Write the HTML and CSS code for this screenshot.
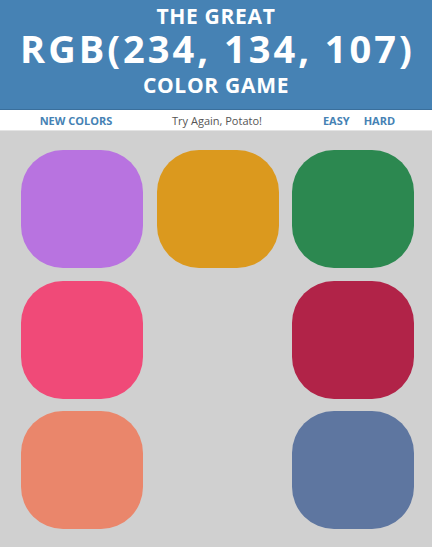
FILE: index.html
```html
<!DOCTYPE html>
<html>
<head>
<meta charset="utf-8">
<link rel="stylesheet" href="styles.css">
</head>
<body>
<header class="banner">
  <div class="title-small">The Great</div>
  <div class="title-big">RGB(234, 134, 107)</div>
  <div class="title-small title-last">Color Game</div>
</header>
<nav class="stripe">
  <span class="btn">New Colors</span>
  <span class="message">Try Again, Potato!</span>
  <span class="modes"><span class="btn">Easy</span><span class="btn">Hard</span></span>
</nav>
<main class="board">
  <div class="square" style="background:#b873e0"></div>
  <div class="square" style="background:#db991e"></div>
  <div class="square" style="background:#2c8850"></div>
  <div class="square" style="background:#f04a78"></div>
  <div class="square hidden"></div>
  <div class="square" style="background:#b12348"></div>
  <div class="square" style="background:#ea866b"></div>
  <div class="square hidden"></div>
  <div class="square" style="background:#5e76a0"></div>
</main>
</body>
</html>
```
FILE: styles.css
```css
html, body {
  margin: 0;
  padding: 0;
  background: #d0d0d0;
  font-family: "Open Sans", "Liberation Sans", sans-serif;
}
.banner {
  background: #4682b4;
  color: #fff;
  text-align: center;
  text-transform: uppercase;
  font-weight: 700;
  height: 110px;
  padding-top: 3px;
  box-sizing: border-box;
  border-bottom: 1px solid #3a6f9c;
}
.title-small {
  font-size: 21px;
  line-height: 26px;
  letter-spacing: 0.7px;
}
.title-last {
  margin-top: 4px;
}
.title-big {
  font-size: 38px;
  line-height: 39px;
  letter-spacing: 3px;
  padding-left: 3px;
}
.stripe {
  background: #fff;
  height: 20px;
  display: grid;
  grid-template-columns: 152px 130px 1fr;
  align-items: center;
  font-size: 11px;
  border-bottom: 1px solid #e4e4e4;
}
.btn {
  color: #4682b4;
  font-weight: 700;
  text-transform: uppercase;
  text-align: center;
}
.message {
  color: #555;
  text-align: center;
}
.modes {
  display: flex;
  justify-content: center;
  gap: 14px;
  padding-left: 4px;
}
.board {
  display: grid;
  grid-template-columns: repeat(3, 122px);
  grid-auto-rows: 118px;
  column-gap: 13.5px;
  row-gap: 12.5px;
  padding: 19px 0 0 21px;
}
.square {
  border-radius: 42px;
}
.hidden {
  background: transparent;
}
```
